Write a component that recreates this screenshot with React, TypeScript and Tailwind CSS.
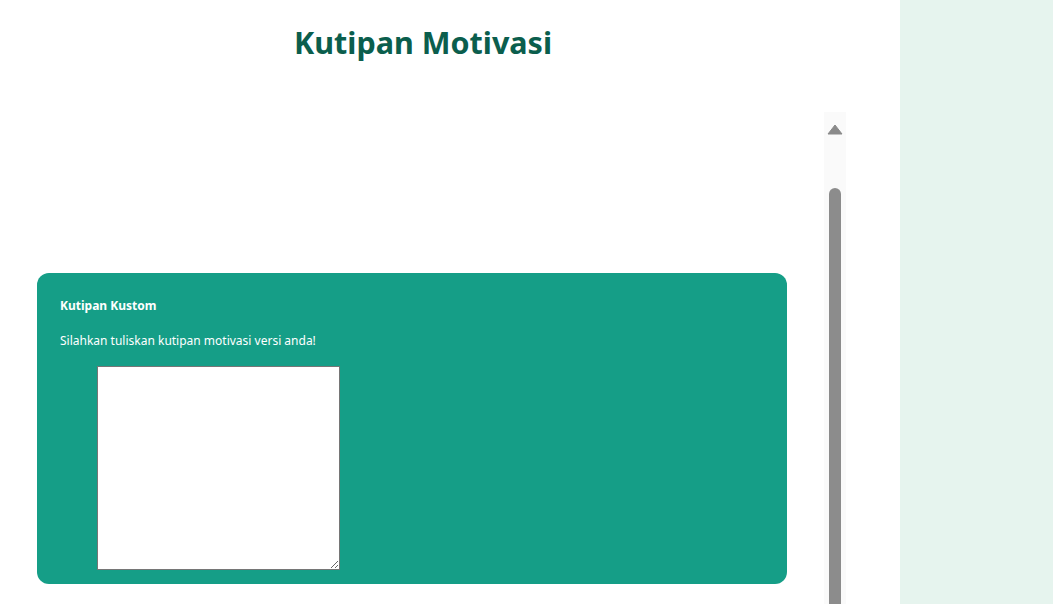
export default function App() {
  return (
    <div className="flex h-[604px] w-full overflow-hidden bg-white font-['Noto_Sans',sans-serif]">
      <main className="flex w-[900px] flex-col">
        <header className="flex h-[112px] w-[846px] justify-center pt-[18px]">
          <h1 className="text-[30.5px] font-bold leading-[48px] text-[#0b5e4d]">Kutipan Motivasi</h1>
        </header>
        <div className="flex flex-1">
          <div className="w-[824px] pt-[161px]">
            <section className="mx-[37px] rounded-[12px] bg-[#159e87] pl-[23px] pr-6 pb-[14px] pt-[24px] text-white">
              <h2 className="text-[12px] font-bold leading-[18px]">Kutipan Kustom</h2>
              <p className="mt-[17px] text-[12px] leading-[18px]">Silahkan tuliskan kutipan motivasi versi anda!</p>
              <textarea
                className="ml-[37px] mt-[16px] block h-[204px] w-[243px] resize border border-[#767676] bg-white text-black"
                aria-label="Kutipan"
              />
            </section>
          </div>
          {/* scrollbar */}
          <div className="flex w-[22px] flex-col items-center bg-[#fafafa]">
            <svg width="16" height="11" viewBox="0 0 16 11" className="mt-[12px]">
              <path d="M8 1 L15 10 L1 10 Z" fill="#8a8a8a" stroke="#8a8a8a" strokeLinejoin="round" />
            </svg>
            <div className="mt-[53px] w-[12px] flex-1 rounded-t-full bg-[#8c8c8c]" />
          </div>
        </div>
      </main>
      <aside className="flex-1 bg-[#e6f4ee]" />
    </div>
  );
}
